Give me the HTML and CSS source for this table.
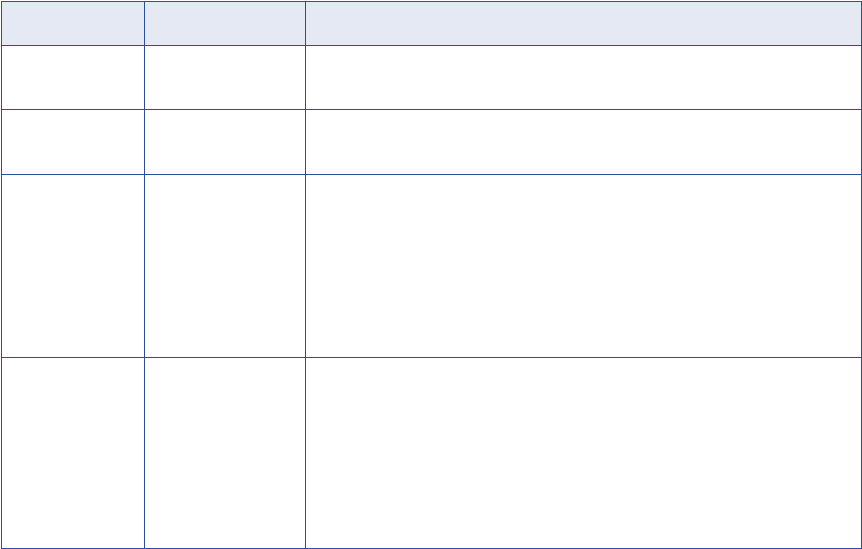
FILE: index.html
```html
<!DOCTYPE html>
<html lang="en">
<head>
<meta charset="utf-8">
<title>Table</title>
<link rel="stylesheet" href="styles.css">
</head>
<body>
<div class="wrap">
  <table class="grid">
    <colgroup>
      <col class="c1">
      <col class="c2">
      <col class="c3">
    </colgroup>
    <thead>
      <tr class="r-head"><th></th><th></th><th></th></tr>
    </thead>
    <tbody>
      <tr class="r1"><td></td><td></td><td></td></tr>
      <tr class="r2"><td></td><td></td><td></td></tr>
      <tr class="r3"><td></td><td></td><td></td></tr>
      <tr class="r4"><td></td><td></td><td></td></tr>
    </tbody>
  </table>
</div>
</body>
</html>
```
FILE: styles.css
```css
html, body {
  margin: 0;
  padding: 0;
  background: #ffffff;
  font-family: "Liberation Sans", Arial, sans-serif;
}
.wrap {
  padding: 1px 0 0 1px;
}
.grid {
  border-collapse: separate;
  border-spacing: 0;
  table-layout: fixed;
  width: 861px;
  border-top: 1px solid #2b4f9d;
  border-left: 1px solid #2b4f9d;
}
.c1 { width: 143px; }
.c2 { width: 161px; }
.c3 { width: 556px; }
.grid th,
.grid td {
  box-sizing: border-box;
  padding: 0;
  border-right: 1px solid #2b4f9d;
  border-bottom: 1px solid #2b4f9d;
}
.grid th {
  background: #e4e9f4;
}
.r-head { height: 44px; }
.r1 { height: 64px; }
.r2 { height: 65px; }
.r3 { height: 183px; }
.r4 { height: 191px; }
```
